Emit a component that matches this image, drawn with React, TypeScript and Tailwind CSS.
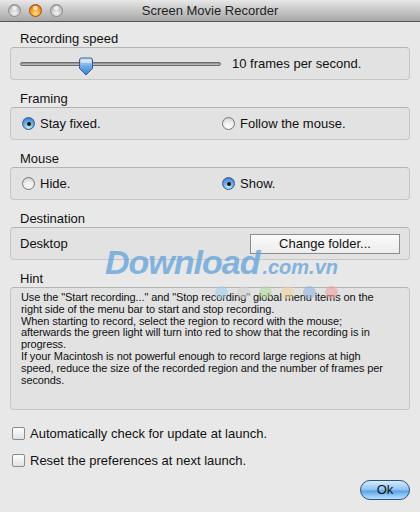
import React from "react";

const FONT = { fontFamily: '"Liberation Sans", Arial, sans-serif' };

function Light({ color }: { color: "gray" | "orange" }) {
  const fill =
    color === "orange"
      ? "bg-[radial-gradient(circle_at_50%_75%,#ffe08a_0%,#f7a12a_45%,#c65a08_100%)] border-[#a4500c]"
      : "bg-[radial-gradient(circle_at_50%_75%,#f2f2f2_0%,#c9c9c9_50%,#9a9a9a_100%)] border-[#8a8a8a]";
  return (
    <span
      className={`relative block size-[13px] rounded-full border ${fill}`}
    >
      <span className="absolute left-[3px] top-[1px] h-[4px] w-[5px] rounded-full bg-white/70" />
    </span>
  );
}

function TitleBar() {
  return (
    <div className="relative flex h-[22px] shrink-0 items-center border-b border-[#555] bg-gradient-to-b from-[#e8e8e8] to-[#a7a7a7] px-[8px]">
      <div className="flex gap-[8px]">
        <Light color="gray" />
        <Light color="orange" />
        <Light color="gray" />
      </div>
      <div className="absolute inset-x-0 top-0 flex h-[21px] items-center justify-center text-[13px] text-[#222]">
        Screen Movie Recorder
      </div>
    </div>
  );
}

function Radio({ on }: { on?: boolean }) {
  return on ? (
    <span className="flex size-[13px] shrink-0 items-center justify-center rounded-full border border-[#3b5c8c] bg-[radial-gradient(circle_at_50%_80%,#c8ecff_0%,#6eaee8_45%,#2f6cc0_100%)]">
      <span className="size-[4px] rounded-full bg-[#111]" />
    </span>
  ) : (
    <span className="block size-[13px] shrink-0 rounded-full border border-[#777] bg-[radial-gradient(circle_at_50%_80%,#ffffff_0%,#ececec_50%,#c4c4c4_100%)]" />
  );
}

function Checkbox() {
  return (
    <span className="block size-[13px] shrink-0 rounded-[2px] border border-[#8a8a8a] bg-gradient-to-b from-[#fdfdfd] to-[#e2e2e2]" />
  );
}

function Section({
  label,
  children,
  boxClass = "h-[33px]",
}: {
  label: string;
  children: React.ReactNode;
  boxClass?: string;
}) {
  return (
    <div className="flex flex-col">
      <div className="flex h-[16px] items-center pl-[10px] text-[13px] text-[#111]">
        {label}
      </div>
      <div
        className={`rounded-[4px] border border-[#c6c6c6] border-t-[#b4b4b4] bg-[#e2e2e2] ${boxClass}`}
      >
        {children}
      </div>
    </div>
  );
}

function SliderKnob() {
  return (
    <svg width="16" height="19" viewBox="0 0 16 19">
      <defs>
        <linearGradient id="kn" x1="0" y1="0" x2="0" y2="1">
          <stop offset="0" stopColor="#cfe6fb" />
          <stop offset="0.5" stopColor="#6ea9e6" />
          <stop offset="1" stopColor="#3d7fd0" />
        </linearGradient>
      </defs>
      <path
        d="M1.5 3 Q1.5 1 3.5 1 H12.5 Q14.5 1 14.5 3 V11.5 L8 18 L1.5 11.5 Z"
        fill="url(#kn)"
        stroke="#3f5f8a"
      />
      <path d="M3 3 H13 V6 H3 Z" fill="#fff" opacity="0.45" />
    </svg>
  );
}

// line breaks follow the original dialog's wrapping
function HintText() {
  return (
    <div className="whitespace-nowrap pl-[10px] pt-[4px] text-[11px] leading-[11.8px] tracking-[-0.1px] text-[#111]">
      <p>
        Use the "Start recording..." and "Stop recording" global menu items on the
        <br />
        right side of the menu bar to start and stop recording.
      </p>
      <p>
        When starting to record, select the region to record with the mouse;
        <br />
        afterwards the green light will turn into red to show that the recording is in
        <br />
        progress.
      </p>
      <p>
        If your Macintosh is not powerful enough to record large regions at high
        <br />
        speed, reduce the size of the recorded region and the number of frames per
        <br />
        seconds.
      </p>
    </div>
  );
}

function Watermark() {
  const dots = ["#9fd0f0", "#d4d4d4", "#b6dc98", "#f4d49a", "#8fb4e0", "#f0a0a0"];
  return (
    <div className="pointer-events-none absolute left-[105px] top-[246px] flex flex-col items-start opacity-80">
      <div className="flex items-baseline">
        <span className="text-[34px] font-black italic leading-[32px] tracking-[-1px] text-[#6aa6db]">
          Download
        </span>
        <span className="ml-[3px] text-[20px] font-bold italic text-[#6aa6db]">
          .com.vn
        </span>
      </div>
      <div className="ml-[110px] mt-[4px] flex gap-[9px]">
        {dots.map((c, i) => (
          <span
            key={i}
            className="block size-[13px] rounded-full opacity-70"
            style={{ background: c }}
          />
        ))}
      </div>
    </div>
  );
}

export default function App() {
  return (
    <div
      className="relative flex h-[512px] w-[420px] flex-col overflow-hidden bg-[#e8e8e8]"
      style={FONT}
    >
      <TitleBar />
      <div className="flex flex-col gap-[11px] px-[10px] pt-[9px]">
        <Section label="Recording speed">
          <div className="flex h-full items-center pl-[9px]">
            <div className="relative flex h-[19px] w-[201px] items-center">
              <div className="h-[4px] w-full rounded-full border border-[#6d6d6d] bg-gradient-to-b from-[#8a8a8a] to-[#c8c8c8]" />
              <div className="absolute left-[58px] top-[3px]">
                <SliderKnob />
              </div>
            </div>
            <span className="ml-[11px] text-[13px] text-[#111]">
              10 frames per second.
            </span>
          </div>
        </Section>
        <Section label="Framing">
          <div className="grid h-full grid-cols-[200px_1fr] items-center pl-[11px] text-[13px] text-[#111]">
            <div className="flex items-center gap-[5px]">
              <Radio on />
              Stay fixed.
            </div>
            <div className="flex items-center gap-[5px]">
              <Radio />
              Follow the mouse.
            </div>
          </div>
        </Section>
        <Section label="Mouse">
          <div className="grid h-full grid-cols-[200px_1fr] items-center pl-[11px] text-[13px] text-[#111]">
            <div className="flex items-center gap-[5px]">
              <Radio />
              Hide.
            </div>
            <div className="flex items-center gap-[5px]">
              <Radio on />
              Show.
            </div>
          </div>
        </Section>
        <Section label="Destination">
          <div className="flex h-full items-center justify-between pl-[9px] pr-[9px] text-[13px] text-[#111]">
            <span>Desktop</span>
            <button className="flex h-[20px] w-[150px] items-center justify-center border border-[#8c8c8c] bg-gradient-to-b from-[#fbfbfb] to-[#ececec] text-[13px] text-[#111]">
              Change folder...
            </button>
          </div>
        </Section>
        <Section label="Hint" boxClass="h-[123px]">
          <HintText />
        </Section>
      </div>
      <div className="flex flex-col gap-[8px] px-[12px] pt-[14px] text-[13px] leading-[19px] text-[#111]">
        <label className="flex items-center gap-[5px]">
          <Checkbox />
          Automatically check for update at launch.
        </label>
        <label className="flex items-center gap-[5px]">
          <Checkbox />
          Reset the preferences at next launch.
        </label>
      </div>
      <div className="flex justify-end px-[10px] pt-[10px]">
        <button className="relative flex h-[20px] w-[50px] items-center justify-center overflow-hidden rounded-full border border-[#2f4f86] bg-[linear-gradient(to_bottom,#d6ecff_0%,#8cc2f2_50%,#5aa0e8_55%,#b8e4ff_100%)] text-[13px] text-[#111]">
          Ok
        </button>
      </div>
      <Watermark />
    </div>
  );
}
